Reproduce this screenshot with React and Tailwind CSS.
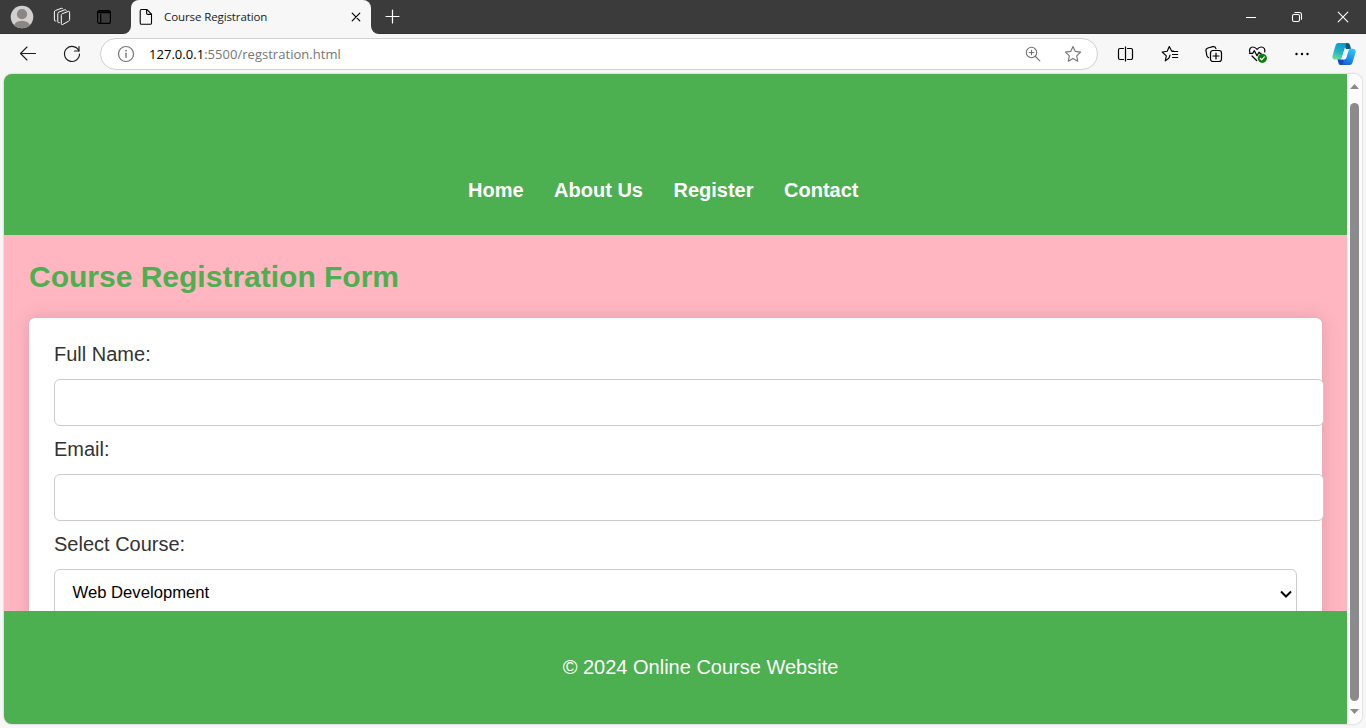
import React from "react";

const ICON = { fill: "none", stroke: "currentColor", strokeLinecap: "round", strokeLinejoin: "round" };

function Avatar() {
  return (
    <svg className="h-6 w-6" viewBox="0 0 24 24">
      <defs>
        <clipPath id="avatar-clip">
          <circle cx="12" cy="12" r="11.3" />
        </clipPath>
      </defs>
      <circle cx="12" cy="12" r="11.3" fill="#d2d0ce" />
      <g clipPath="url(#avatar-clip)" fill="#8a8683">
        <circle cx="12" cy="9.2" r="5.1" />
        <ellipse cx="12" cy="21" rx="8" ry="5.2" />
      </g>
    </svg>
  );
}

function Workspaces() {
  return (
    <svg className="h-5 w-5 text-white" viewBox="0 0 20 20" {...ICON} strokeWidth="1">
      <path d="M9.300 8.200c0-.8.300-1.200 1-1.500l6-2.300c.8-.3 1.300 0 1.300.8v7.300c0 .8-.3 1.300-1 1.700l-6 3.300c-.8.400-1.300.1-1.300-.8Z" />
      <path d="M7.300 15.700c-1 .2-1.500-.1-1.500-1V6.600c0-.8.300-1.200 1-1.500l6-2.300c.7-.2 1.200 0 1.300.6" />
      <path d="M3.900 14c-1 .2-1.500-.1-1.500-1V5c0-.8.300-1.200 1-1.500l6-2.200c.7-.2 1.200 0 1.300.5" />
    </svg>
  );
}

function TabActions() {
  return (
    <svg className="h-4 w-4 text-black" viewBox="0 0 16 16" {...ICON} strokeWidth="1.2">
      <rect x="1.600" y="1.600" width="12.800" height="12.800" rx="2" />
      <path d="M2 3.200h12" strokeWidth="2" />
      <path d="M4.700 5v9" />
    </svg>
  );
}

function PageIcon() {
  return (
    <svg className="h-[18px] w-[14px] text-black" viewBox="0 0 14 18" {...ICON} strokeWidth="1.100">
      <path d="M2.600 1.500h5.200l4.700 4.700v8.700c0 .8-.6 1.400-1.400 1.400H2.600c-.8 0-1.400-.6-1.400-1.400v-12c0-.8.6-1.400 1.400-1.400Z" />
      <path d="M7.600 1.700v3.500c0 .8.5 1.200 1.200 1.200h3.500" />
    </svg>
  );
}

function Back() {
  return (
    <svg className="h-5 w-5" viewBox="0 0 20 20" {...ICON} strokeWidth="1.100">
      <path d="M17.500 9.500H2.500M9 3 2.500 9.500 9 16" />
    </svg>
  );
}

function Refresh() {
  return (
    <svg className="h-5 w-5" viewBox="0 0 20 20" {...ICON} strokeWidth="1.150">
      <path d="M16.900 7A7.500 7.500 0 1 0 17.500 10" />
      <path d="M17 2.500V7h-4.500" />
    </svg>
  );
}

function Info() {
  return (
    <svg className="h-[18px] w-[18px] text-[#767676]" viewBox="0 0 18 18" {...ICON} strokeWidth="1.200">
      <circle cx="9" cy="9" r="7.500" />
      <path d="M9 8.300v4" strokeWidth="1.400" />
      <circle cx="9" cy="5.700" r=".9" fill="currentColor" stroke="none" />
    </svg>
  );
}

function ZoomIn() {
  return (
    <svg className="h-4 w-4 text-[#6f6f6f]" viewBox="0 0 16 16" {...ICON} strokeWidth="1.100">
      <circle cx="6.500" cy="6.500" r="5.200" />
      <path d="M10.500 10.500l4.300 4.300M6.500 4.200v4.600M4.200 6.500h4.600" />
    </svg>
  );
}

function Star() {
  return (
    <svg className="h-[18px] w-[18px] text-[#767676]" viewBox="0 0 18 18" {...ICON} strokeWidth="1.150">
      <path d="M9 1.500l2.300 4.900 5.300.7-3.900 3.700 1 5.400L9 13.600l-4.700 2.600 1-5.400L1.400 7.100l5.300-.7Z" />
    </svg>
  );
}

function SplitScreen() {
  return (
    <svg className="h-[18px] w-[18px]" viewBox="0 0 18 18" {...ICON} strokeWidth="1.200">
      <path d="M8.500 1.500v15" strokeLinecap="butt" />
      <path d="M6.500 3.500H3A1.500 1.500 0 0 0 1.500 5v8A1.500 1.500 0 0 0 3 14.500h3.500M10.500 3.500H14A1.500 1.500 0 0 1 15.500 5v8a1.500 1.500 0 0 1-1.500 1.500h-3.500" />
    </svg>
  );
}

function Favorites() {
  return (
    <svg className="h-[18px] w-[18px]" viewBox="0 0 18 18" {...ICON} strokeWidth="1.150">
      <path d="M7.800 13.200 4.300 15.900l1-5.100L1.200 7l5-.8L8.300 1.500l2.300 4.600h1.900" />
      <path d="M11.500 6.500h5.200M11.500 9.500h5.200M11.500 12.500h5.200M9 10l-.8 2.500" />
    </svg>
  );
}

function Collections() {
  return (
    <svg className="h-[18px] w-[18px]" viewBox="0 0 18 18" {...ICON} strokeWidth="1.200">
      <path d="M3.800 12.700c-1-.3-1.600-.8-1.900-2L1 6c-.3-1.600.4-2.600 1.900-3l5-1.300c1.500-.3 2.500.2 2.900 1.600l.1.400" />
      <rect x="5.500" y="5.500" width="11" height="11" rx="2.500" />
      <path d="M11 8v6M8 11h6" />
    </svg>
  );
}

function Essentials() {
  return (
    <svg className="h-5 w-5" viewBox="0 0 20 20" {...ICON} strokeWidth="1.200">
      <path d="M1.800 8.300C.9 5.600 2.200 3 4.900 3c1.800 0 3 .9 4.200 2.400C10.200 3.900 11.500 3 13.300 3c2.700 0 4.100 2.400 3.400 5" />
      <path d="M1.500 9.300h3.200l1.700-2.600 2.600 5 2-3.500.9 1.100h1.200" />
      <path d="M4 12l4.600 4.500" />
      <circle cx="14.300" cy="14.300" r="4.600" fill="#0f7b0f" stroke="none" />
      <path d="M12.300 14.500l1.400 1.300 2.700-2.900" stroke="#fff" />
    </svg>
  );
}

function More() {
  return (
    <svg className="h-4 w-4" viewBox="0 0 16 16" fill="currentColor">
      <circle cx="2.500" cy="8" r="1.200" />
      <circle cx="8" cy="8" r="1.200" />
      <circle cx="13.500" cy="8" r="1.200" />
    </svg>
  );
}

function Copilot() {
  return (
    <svg className="h-6 w-6" viewBox="0 0 24 24">
      <defs>
        <linearGradient id="cp-a" x1=".6" y1="0" x2=".3" y2="1">
          <stop offset="0" stopColor="#0a9bd8" />
          <stop offset=".5" stopColor="#1fb0c4" />
          <stop offset="1" stopColor="#66dd9a" />
        </linearGradient>
        <linearGradient id="cp-b" x1=".7" y1="0" x2=".3" y2="1">
          <stop offset="0" stopColor="#31c4fa" />
          <stop offset=".6" stopColor="#1b8cf0" />
          <stop offset="1" stopColor="#155fd6" />
        </linearGradient>
      </defs>
      <path d="M11 1h4.500c1.400 0 2 .8 2.500 2.300l1.300 4.200h-5Z" fill="#0b5875" />
      <path d="M5.300 16.500h6l2 6.500H8.500c-1.200 0-1.700-.8-2-2Z" fill="#1747c4" />
      <path d="M6.500 1h9c-1.200.3-1.600 1.200-2 2.500L10 15.200c-.5 1.600-1.300 2.300-2.800 2.300H3.200c-2.300 0-3.300-1.500-2.700-3.800l3-10.200C4 1.800 5 1 6.500 1Z" fill="url(#cp-a)" />
      <path d="M17.500 6.800h3.300c2.300 0 3.400 1.400 2.700 3.700l-3 10c-.5 1.700-1.400 2.500-2.900 2.500H9.200c1.200-.4 1.600-1.400 2-2.500L14.700 9c.4-1.500 1.300-2.200 2.800-2.200Z" fill="url(#cp-b)" />
      <path d="M14.600 7h4c-1.300.300-1.900 1.200-2.300 2.500l-1.700 5.800c-.5 1.600-1.400 2.200-2.900 2.200H8.200c1-.3 1.500-1.200 1.800-2.200l1.900-6c.5-1.600 1.300-2.300 2.700-2.300Z" fill="#f7fbff" />
    </svg>
  );
}

function ToolButton({ children }) {
  return <button className="flex h-8 w-11 items-center justify-center">{children}</button>;
}

function TitleBar() {
  return (
    <header className="flex h-[34px] shrink-0 border-b border-[#323232] bg-[#3b3b3b]">
      <div className="flex w-[131px] items-center">
        <div className="ml-[10px]"><Avatar /></div>
        <div className="ml-[18px]"><Workspaces /></div>
        <div className="ml-6"><TabActions /></div>
      </div>
      <div className="relative flex h-[34px] w-[240px] items-center rounded-t-lg bg-[#f7f7f7] pl-2">
        <svg className="absolute bottom-0 -left-2 h-2 w-2" viewBox="0 0 8 8"><path d="M8 0v8H0a8 8 0 0 0 8-8Z" fill="#f7f7f7" /></svg>
        <svg className="absolute -right-2 bottom-0 h-2 w-2" viewBox="0 0 8 8"><path d="M0 0v8h8a8 8 0 0 1-8-8Z" fill="#f7f7f7" /></svg>
        <PageIcon />
        <span className="ml-[11px] font-['Open_Sans',sans-serif] text-[11.500px] tracking-[-0.1px] text-[#1b1b1b]">Course Registration</span>
        <svg className="mr-[10px] ml-auto h-[10px] w-[10px] text-black" viewBox="0 0 10 10" {...ICON} strokeWidth="1.200"><path d="M1.200 1.200l7.600 7.600M8.800 1.200 1.200 8.800" /></svg>
      </div>
      <svg className="mt-[9px] ml-[14px] h-4 w-4 text-white" viewBox="0 0 16 16" {...ICON} strokeWidth="1.200"><path d="M7.500 1v13M1 7.500h13" /></svg>
      <div className="ml-auto flex items-center text-white">
        <div className="flex w-[46px] justify-center"><svg className="h-3 w-3" viewBox="0 0 12 12" {...ICON} strokeWidth="1" strokeLinecap="butt"><path d="M1 6.500h10" /></svg></div>
        <div className="flex w-[46px] justify-center">
          <svg className="h-3 w-3" viewBox="0 0 12 12" {...ICON} strokeWidth="1.100">
            <rect x="1.500" y="3.500" width="7" height="7" rx="1.500" />
            <path d="M3.800 1.500h4.700a2 2 0 0 1 2 2v4.700" />
          </svg>
        </div>
        <div className="flex w-[46px] justify-center"><svg className="h-3 w-3" viewBox="0 0 12 12" {...ICON} strokeWidth="1.100"><path d="M1.200 1.200l9.600 9.600M10.800 1.200l-9.600 9.600" /></svg></div>
      </div>
    </header>
  );
}

function Toolbar() {
  return (
    <div className="flex h-10 shrink-0 items-center pl-[6px] text-[#1b1b1b]">
      <ToolButton><Back /></ToolButton>
      <ToolButton><Refresh /></ToolButton>
      <div className="ml-[6px] flex h-8 w-[998px] items-center rounded-full border border-[#d1d1d1] bg-white pl-4">
        <Info />
        <p className="ml-[14px] pt-[2px] font-['Open_Sans',sans-serif] text-[13px] tracking-[0.03px] text-[#767676]">
          <span className="text-black">127.0.0.1</span>:5500/regstration.html
        </p>
        <div className="mr-[15px] ml-auto flex items-center gap-[23px]">
          <ZoomIn />
          <Star />
        </div>
      </div>
      <div className="ml-[6px] flex items-center text-black">
        <ToolButton><SplitScreen /></ToolButton>
        <ToolButton><Favorites /></ToolButton>
        <ToolButton><Collections /></ToolButton>
        <ToolButton><Essentials /></ToolButton>
        <ToolButton><More /></ToolButton>
        <div className="ml-2"><Copilot /></div>
      </div>
    </div>
  );
}

function Field({ id, label }) {
  return (
    <div className="mb-3">
      <label htmlFor={id} className="block text-xl leading-[23px]">{label}</label>
      <input id={id} className="mt-[13px] block h-[47px] w-[1270px] rounded-[6px] border border-[#ccc] bg-white px-3 outline-none" />
    </div>
  );
}

function CoursePage() {
  return (
    <div className="flex w-[1343px] flex-col bg-[#ffb6c1] text-[#333]">
      <nav className="flex h-[161px] shrink-0 gap-[30.500px] bg-[#4caf50] pt-[105px] pl-[464px] text-xl leading-[23px] font-bold text-white">
        <a>Home</a>
        <a>About Us</a>
        <a>Register</a>
        <a>Contact</a>
      </nav>
      <main className="flex h-[376px] shrink-0 flex-col overflow-hidden px-[25px] pt-[25px]">
        <h2 className="text-[30px] leading-[34px] font-bold text-[#4caf50]">Course Registration Form</h2>
        <form className="mt-6 h-[420px] shrink-0 rounded-[6px] bg-white p-[25px] shadow-[0_0_19px_rgba(0,0,0,0.12)]">
          <Field id="name" label="Full Name:" />
          <Field id="email" label="Email:" />
          <div className="text-xl leading-[23px]">Select Course:</div>
          <div className="mt-[13px] flex h-[47px] items-center justify-between rounded-[6px] border border-[#ccc] bg-white pr-1 pl-[17.500px] text-[16.670px] text-black">
            <span>Web Development</span>
            <svg className="mt-[2px] h-3 w-3" viewBox="0 0 12 12" fill="none" stroke="currentColor" strokeWidth="2"><path d="M1 3.500l5 5 5-5" /></svg>
          </div>
        </form>
      </main>
      <footer className="flex h-[113px] shrink-0 items-center justify-center bg-[#4caf50] pb-[2px] pl-[50px] text-xl text-white">
        <p>© 2024 Online Course Website</p>
      </footer>
    </div>
  );
}

function Scrollbar() {
  return (
    <div className="flex w-[15px] flex-col items-center bg-[#fcfcfc] text-[#8b8b8b]">
      <svg className="mt-[10px] h-[5px] w-[9px]" viewBox="0 0 9 5" fill="currentColor"><path d="M4.500 0 9 5H0Z" /></svg>
      <div className="mt-[14px] h-[598px] w-[9px] rounded-full bg-[#8b8b8b]" />
      <svg className="mt-2 h-[5px] w-[9px]" viewBox="0 0 9 5" fill="currentColor"><path d="M4.500 5 0 0h9Z" /></svg>
    </div>
  );
}

export default function App() {
  return (
    <div className="flex h-[728px] w-[1366px] flex-col overflow-hidden bg-[#f7f7f7]">
      <TitleBar />
      <Toolbar />
      <div className="mx-1 flex h-[650px] w-[1358px] shrink-0 overflow-hidden rounded-lg font-['Liberation_Sans',Arial,sans-serif] shadow-[0_0_2px_rgba(0,0,0,0.3)]">
        <CoursePage />
        <Scrollbar />
      </div>
    </div>
  );
}
